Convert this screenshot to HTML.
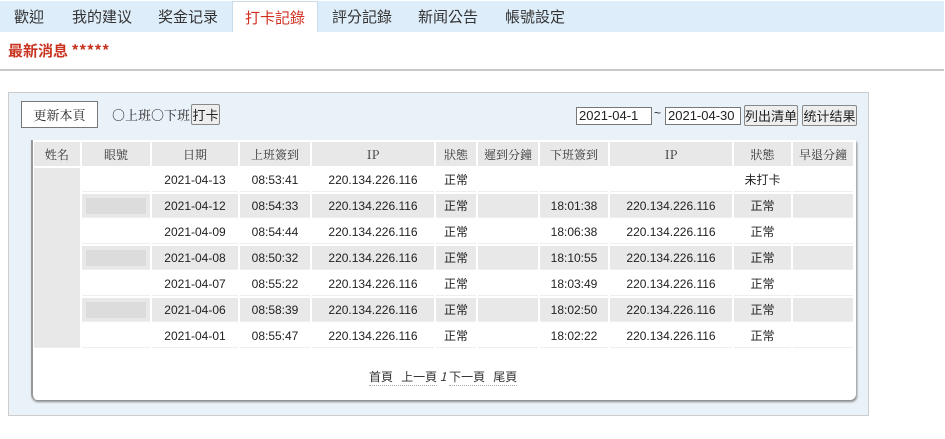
<!DOCTYPE html>
<html><head><meta charset="utf-8"><style>
*{margin:0;padding:0;box-sizing:border-box}
body{width:945px;height:439px;background:#fff;font-family:"Liberation Sans","Noto Sans CJK TC",sans-serif;position:relative;overflow:hidden;color:#222}
.bar{position:absolute;left:0;top:1px;width:944px;height:31px;background:#deedfa}
.tab{position:absolute;top:1px;height:31px;line-height:31px;font-size:15px;color:#333;font-family:"Noto Sans CJK TC",sans-serif}
.tab.act{background:#fff;color:#d03020;border:1px solid #c9dcec;border-bottom:none;text-align:center}
.news{position:absolute;left:8px;top:40px;font-size:15px;color:#c8321e;font-weight:bold;font-family:"Noto Sans CJK TC",sans-serif}
.hr{position:absolute;left:0;top:69px;width:944px;height:2px;background:#c8c8c8}
.panel{position:absolute;left:8px;top:92px;width:861px;height:324px;background:#eaf2f9;border:1px solid #ccc}
.btn{position:absolute;background:#fff;border:1px solid #777;font-size:13px;font-family:"Noto Serif CJK TC",serif;text-align:center}
.gbtn{position:absolute;background:#eee;border:1px solid #888;border-radius:2px;font-size:13px;text-align:center;font-family:"Noto Sans CJK TC",sans-serif}
.inp{position:absolute;background:#fff;border:1px solid #777;font-size:13px;padding-left:2px}
.box{position:absolute;left:31px;top:140px;width:825px;height:260px;background:#fff;border-left:2px solid #999;box-shadow:1px 2px 2px #888;border-radius:0 0 6px 6px}
table{position:absolute;left:32px;top:142px;border-collapse:separate;border-spacing:2px 2px;margin:-2px 0 0 0;font-size:12px}
td,th{height:24px;text-align:center;padding:0}
th{background:#e8e8e8;font-family:"Noto Serif CJK TC",serif;font-weight:normal;color:#333;font-size:12px}
tr.g td{background:#e8e8e8}
td.n{background:#e8e8e8}
td{border-bottom:1px solid #eee}
td.b span{display:inline-block;width:60px;height:16px;background:#dcdcdc;vertical-align:middle}
.pg{position:absolute;left:369px;top:368px;font-size:12px;color:#333;font-family:"Noto Sans CJK TC",sans-serif}
.pg span{border-bottom:1px dotted #aaa}
</style></head><body>
<div class="bar"></div>
<div class="tab" style="left:14px">歡迎</div>
<div class="tab" style="left:72px">我的建议</div>
<div class="tab" style="left:158px">奖金记录</div>
<div class="tab act" style="left:232px;width:86px">打卡記錄</div>
<div class="tab" style="left:332px">評分記錄</div>
<div class="tab" style="left:418px">新闻公告</div>
<div class="tab" style="left:505px">帳號設定</div>
<div class="news">最新消息 *****</div>
<div class="hr"></div>
<div class="panel"></div>
<div class="btn" style="left:21px;top:101px;width:77px;height:27px;line-height:25px">更新本頁</div>
<div style="position:absolute;left:112px;top:105px;font-size:13px;font-family:'Noto Serif CJK TC',serif">○上班○下班</div>
<div class="gbtn" style="left:191px;top:104px;width:29px;height:21px;line-height:19px">打卡</div>
<div class="inp" style="left:576px;top:107px;width:76px;height:18px;line-height:16px">2021-04-1</div>
<div style="position:absolute;left:654px;top:106px;font-size:12px">~</div>
<div class="inp" style="left:665px;top:107px;width:76px;height:18px;line-height:16px">2021-04-30</div>
<div class="gbtn" style="left:744px;top:105px;width:54px;height:21px;line-height:19px">列出清单</div>
<div class="gbtn" style="left:802px;top:105px;width:55px;height:21px;line-height:19px">统计结果</div>
<div class="box"></div>
<table>
<tr><th style="width:46px">姓名</th><th style="width:68px">眼號</th><th style="width:86px">日期</th><th style="width:70px">上班簽到</th><th style="width:122px">IP</th><th style="width:40px">狀態</th><th style="width:60px">遲到分鐘</th><th style="width:68px">下班簽到</th><th style="width:122px">IP</th><th style="width:57px">狀態</th><th style="width:60px">早退分鐘</th></tr>
<tr><td class="n" rowspan="7"></td><td></td><td>2021-04-13</td><td>08:53:41</td><td>220.134.226.116</td><td>正常</td><td></td><td></td><td></td><td>未打卡</td><td></td></tr>
<tr class="g"><td class="b"><span></span></td><td>2021-04-12</td><td>08:54:33</td><td>220.134.226.116</td><td>正常</td><td></td><td>18:01:38</td><td>220.134.226.116</td><td>正常</td><td></td></tr>
<tr><td></td><td>2021-04-09</td><td>08:54:44</td><td>220.134.226.116</td><td>正常</td><td></td><td>18:06:38</td><td>220.134.226.116</td><td>正常</td><td></td></tr>
<tr class="g"><td class="b"><span></span></td><td>2021-04-08</td><td>08:50:32</td><td>220.134.226.116</td><td>正常</td><td></td><td>18:10:55</td><td>220.134.226.116</td><td>正常</td><td></td></tr>
<tr><td></td><td>2021-04-07</td><td>08:55:22</td><td>220.134.226.116</td><td>正常</td><td></td><td>18:03:49</td><td>220.134.226.116</td><td>正常</td><td></td></tr>
<tr class="g"><td class="b"><span></span></td><td>2021-04-06</td><td>08:58:39</td><td>220.134.226.116</td><td>正常</td><td></td><td>18:02:50</td><td>220.134.226.116</td><td>正常</td><td></td></tr>
<tr><td></td><td>2021-04-01</td><td>08:55:47</td><td>220.134.226.116</td><td>正常</td><td></td><td>18:02:22</td><td>220.134.226.116</td><td>正常</td><td></td></tr>
</table>
<div class="pg"><span>首頁&nbsp;&nbsp; 上一頁</span> <i>1</i> <span>下一頁&nbsp;&nbsp; 尾頁</span></div>
</body></html>
